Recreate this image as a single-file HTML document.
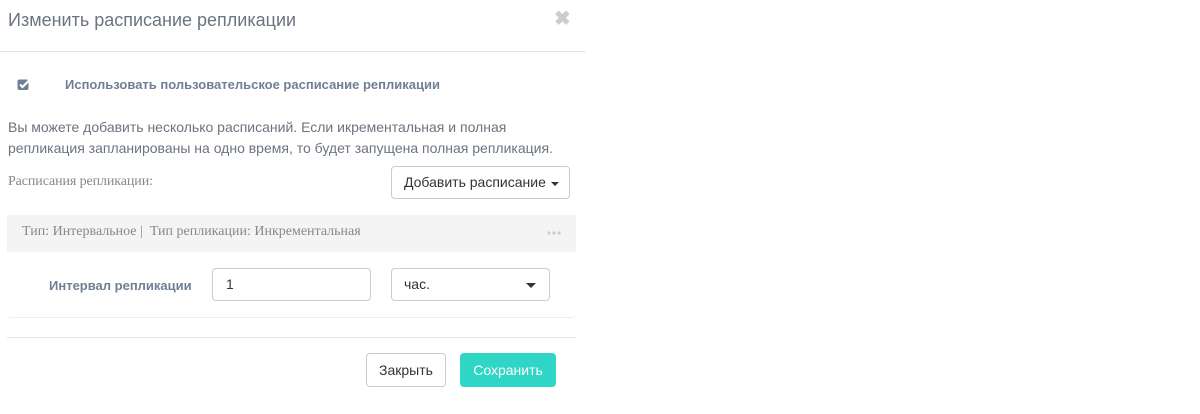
<!DOCTYPE html>
<html><head><meta charset="utf-8"><style>
body{margin:0;width:1200px;height:414px;background:#fff;font-family:"Liberation Sans",sans-serif;position:relative;overflow:hidden}
.a{position:absolute}
.serif{font-family:"Liberation Serif",serif}
.caret{position:absolute;width:0;height:0;border-left:4px solid transparent;border-right:4px solid transparent;border-top:4px solid #333}
</style></head><body>
<div class="a" style="left:8px;top:10px;font-size:18px;color:#6b7480">Изменить расписание репликации</div>
<div class="a" style="left:554px;top:6px;font-size:20px;color:#ccc;font-weight:bold">✖</div>
<div class="a" style="left:0;top:51px;width:586px;height:1px;background:#e5e5e5"></div>
<svg class="a" style="left:17px;top:78px" width="14" height="13" viewBox="0 0 14 13"><rect x="0.5" y="1.5" width="11" height="10.5" rx="2" fill="#6f7f94"/><path d="M3 6.5l2.5 2.5 7-7" stroke="#fff" stroke-width="2.2" fill="none"/></svg>
<div class="a" style="left:65px;top:77px;font-size:13px;font-weight:bold;color:#6f7f94">Использовать пользовательское расписание репликации</div>
<div class="a" style="left:8px;top:117px;font-size:14px;line-height:21px;color:#6b7480">Вы можете добавить несколько расписаний. Если икрементальная и полная<br>репликация запланированы на одно время, то будет запущена полная репликация.</div>
<div class="a serif" style="left:8px;top:174px;font-size:14px;color:#888;letter-spacing:-0.1px">Расписания репликации:</div>
<div class="a" style="left:391px;top:166px;width:179px;height:33px;border:1px solid #ccc;border-radius:4px;box-sizing:border-box;font-size:14px;color:#333;line-height:31px;padding-left:12px">Добавить расписание<span class="caret" style="left:159px;top:15px"></span></div>
<div class="a" style="left:7px;top:215px;width:569px;height:37px;background:#f4f4f4"></div>
<div class="a serif" style="left:22px;top:224px;font-size:14px;color:#888">Тип: Интервальное | &nbsp;Тип репликации: Инкрементальная</div>
<svg class="a" style="left:547px;top:231px" width="14" height="4"><circle cx="2" cy="2" r="1.6" fill="#ccc"/><circle cx="7" cy="2" r="1.6" fill="#ccc"/><circle cx="12" cy="2" r="1.6" fill="#ccc"/></svg>
<div class="a" style="left:7px;top:252px;width:569px;height:65px;border-bottom:1px solid #eee;border-radius:0 0 4px 4px"></div>
<div class="a" style="left:49px;top:278px;font-size:13px;font-weight:bold;color:#6f7f94">Интервал репликации</div>
<div class="a" style="left:212px;top:268px;width:159px;height:33px;border:1px solid #ccc;border-radius:4px;box-sizing:border-box;font-size:14px;color:#333;line-height:31px;padding-left:13px">1</div>
<div class="a" style="left:391px;top:268px;width:159px;height:33px;border:1px solid #ccc;border-radius:4px;box-sizing:border-box;font-size:14px;color:#333;line-height:31px;padding-left:12px">час.<span class="caret" style="right:13px;top:14px;border-left-width:5px;border-right-width:5px;border-top-width:5px"></span></div>
<div class="a" style="left:7px;top:337px;width:569px;height:1px;background:#e5e5e5"></div>
<div class="a" style="left:366px;top:353px;width:80px;height:34px;border:1px solid #ccc;border-radius:4px;box-sizing:border-box;font-size:14px;color:#333;line-height:32px;text-align:center">Закрыть</div>
<div class="a" style="left:460px;top:353px;width:96px;height:34px;background:#2fd5c5;border-radius:4px;font-size:14px;color:#fff;line-height:34px;text-align:center">Сохранить</div>
</body></html>
